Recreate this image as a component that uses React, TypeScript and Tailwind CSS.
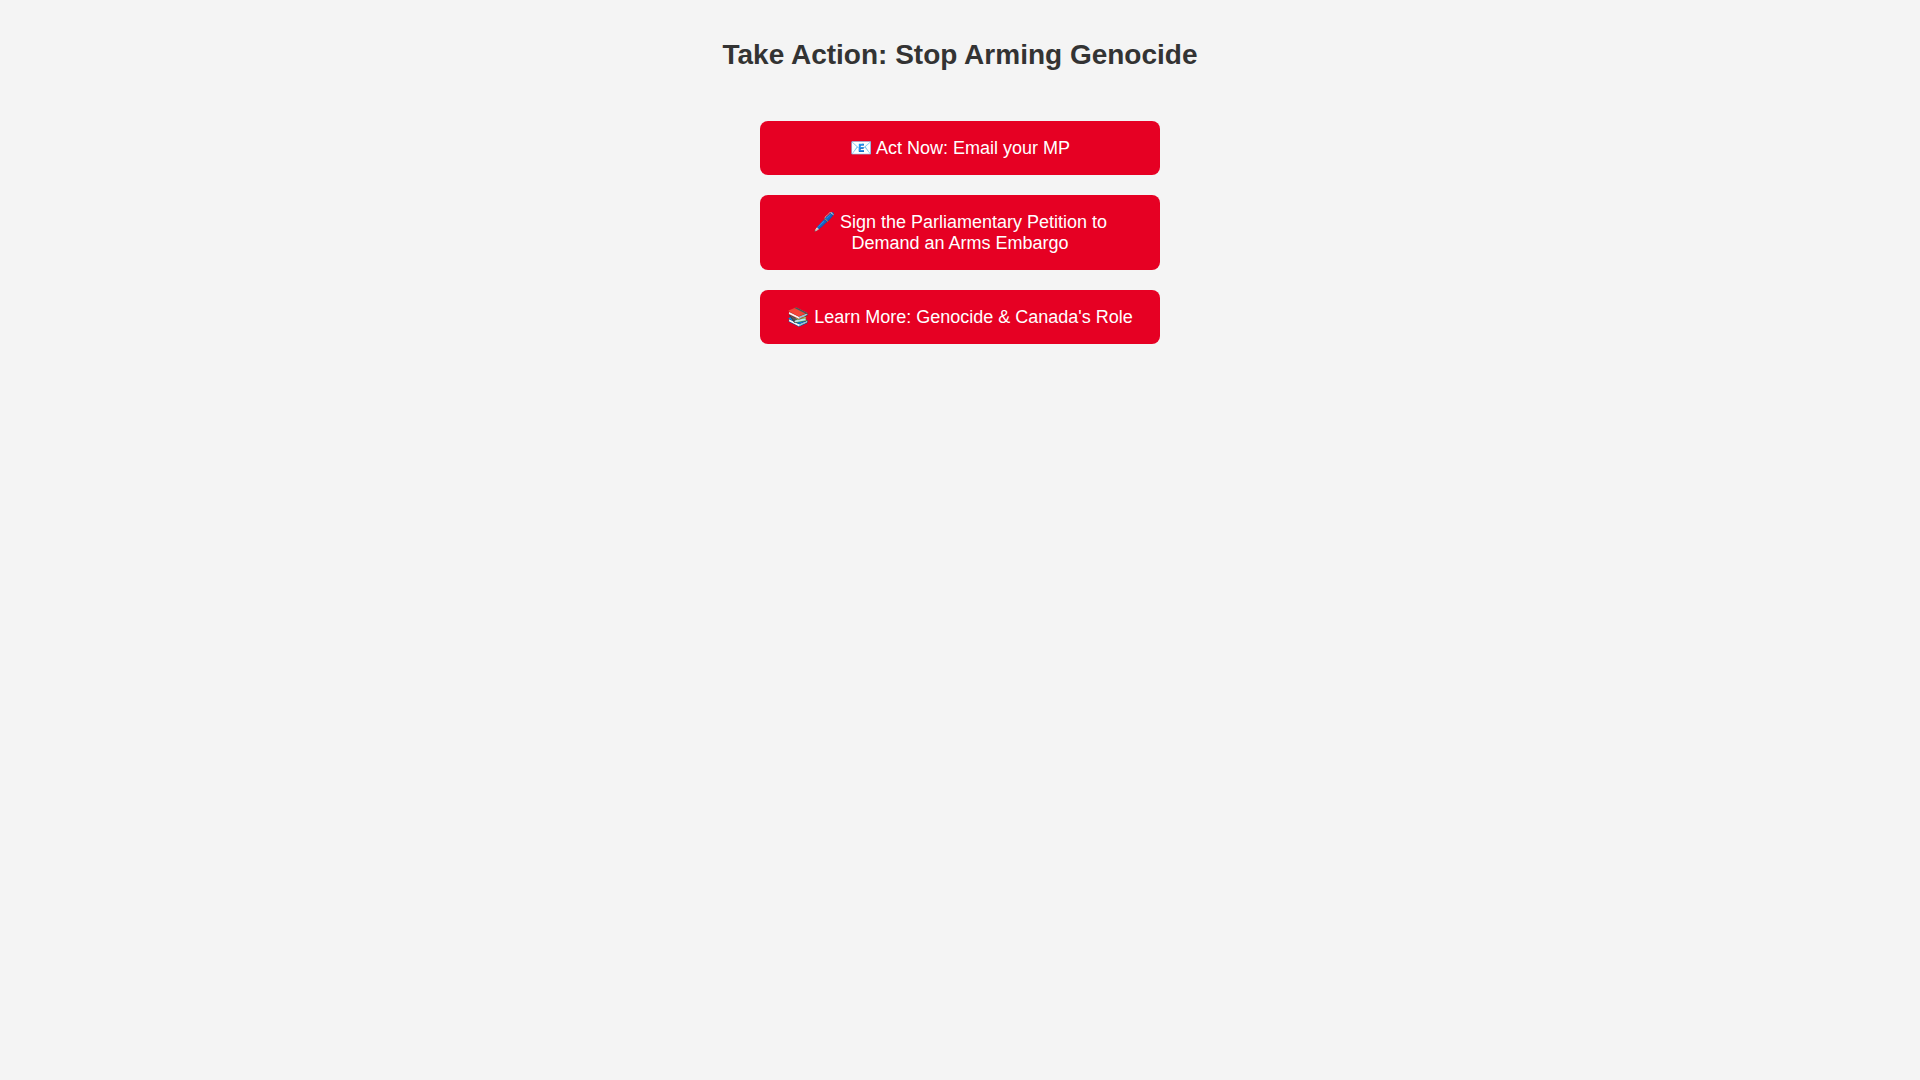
import React, { FC } from "react";

type Action = {
  icon: string;
  label: string;
  href: string;
};

const actions: Action[] = [
  { icon: "📧", label: "Act Now: Email your MP", href: "#email" },
  {
    icon: "🖊️",
    label: "Sign the Parliamentary Petition to Demand an Arms Embargo",
    href: "#petition",
  },
  {
    icon: "📚",
    label: "Learn More: Genocide & Canada's Role",
    href: "#learn",
  },
];

const App: FC = () => {
  return (
    <main className="min-h-screen bg-[#f4f4f4] px-5 pt-[37px] pb-5 text-center font-['Liberation_Sans',Arial,sans-serif]">
      <h1 className="mb-12 text-[28px] leading-9 font-bold text-[#333333]">
        Take Action: Stop Arming Genocide
      </h1>

      {/* Action links */}
      <nav className="mx-auto flex w-full max-w-[400px] flex-col gap-5">
        {actions.map((action) => (
          <a
            key={action.href}
            href={action.href}
            className="rounded-lg bg-[#e60023] px-5 py-4 text-[18px] leading-[normal] text-white transition hover:bg-[#b8001c]"
          >
            {action.icon} {action.label}
          </a>
        ))}
      </nav>
    </main>
  );
};

export default App;
